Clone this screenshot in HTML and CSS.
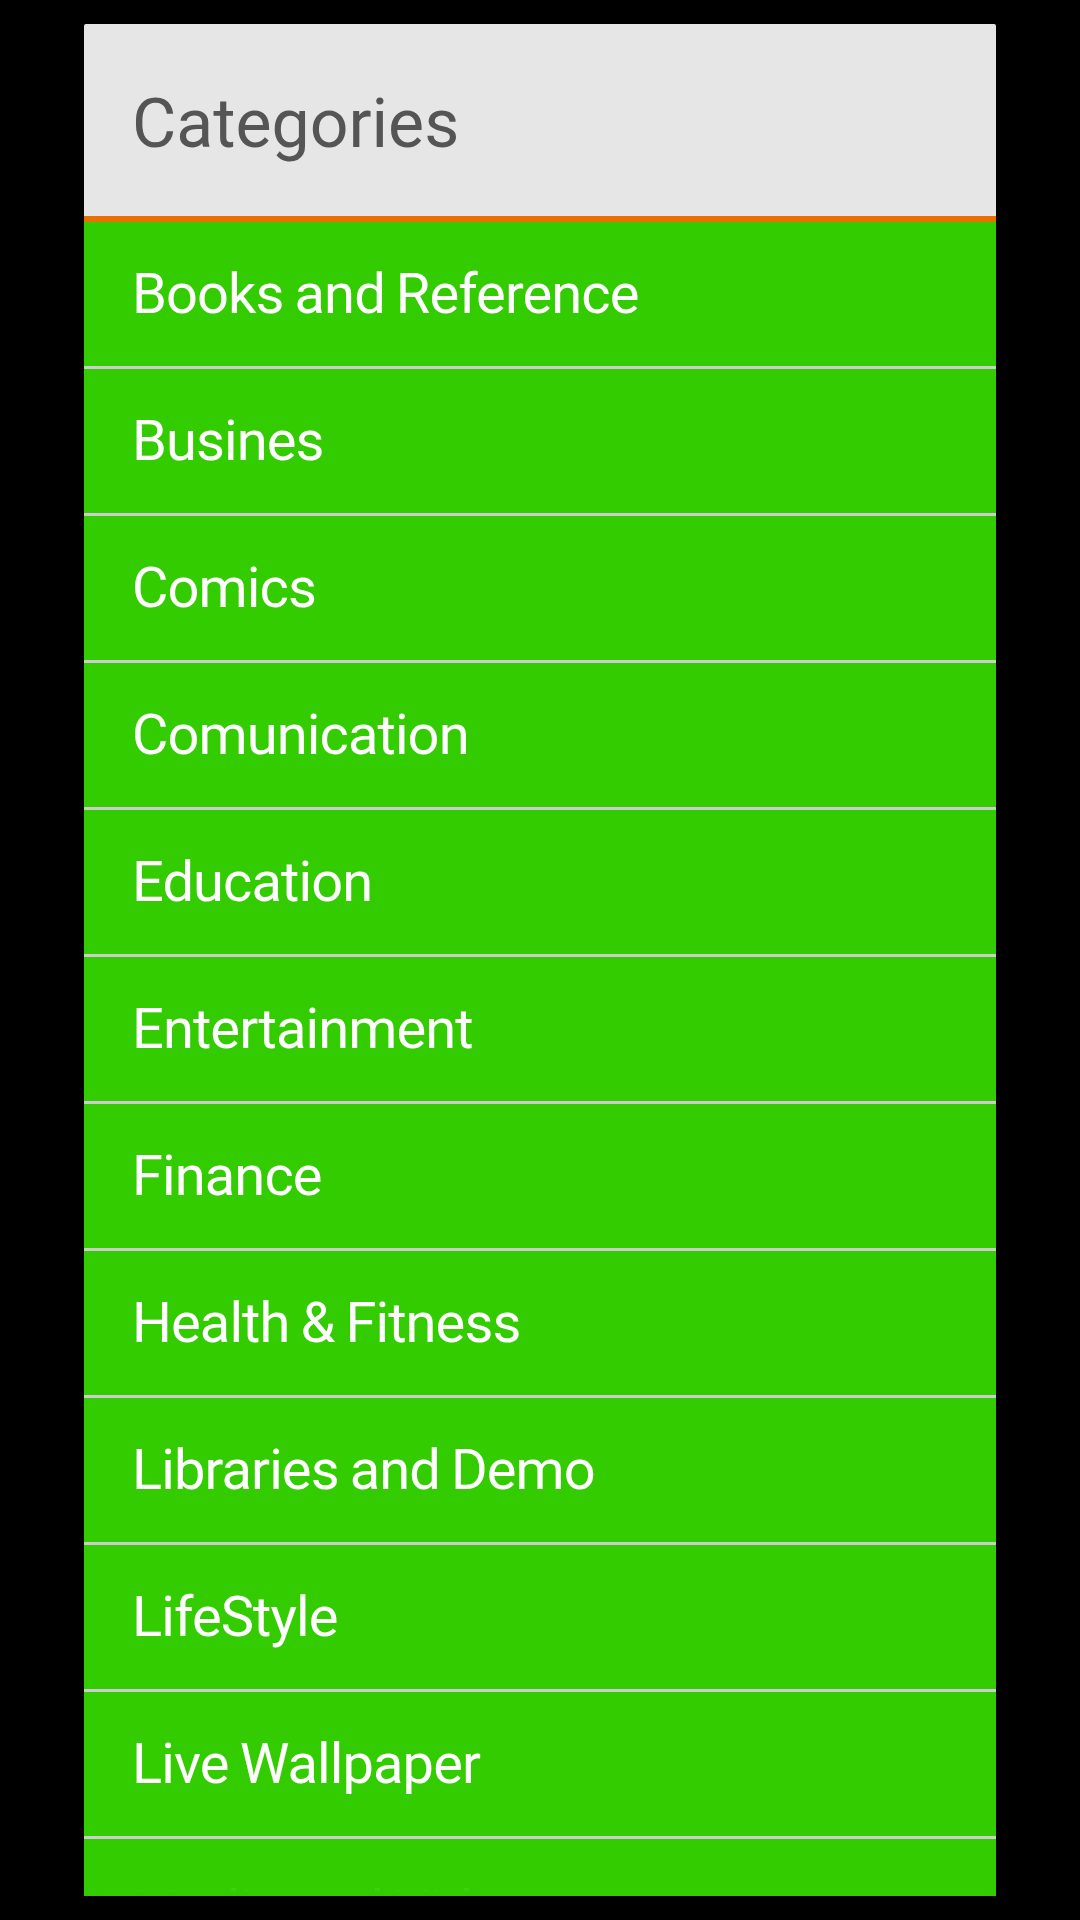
FILE: index.html
```html
<!DOCTYPE html>
<html>
<head>
<meta charset="utf-8">
<link rel="stylesheet" href="styles.css">
</head>
<body>
<div class="dialog">
  <div class="header"><span class="title">Categories</span></div>
  <div class="list">
    <div class="row">Books and Reference</div>
    <div class="row">Busines</div>
    <div class="row">Comics</div>
    <div class="row">Comunication</div>
    <div class="row">Education</div>
    <div class="row">Entertainment</div>
    <div class="row">Finance</div>
    <div class="row">Health &amp; Fitness</div>
    <div class="row">Libraries and Demo</div>
    <div class="row">LifeStyle</div>
    <div class="row">Live Wallpaper</div>
    <div class="row">Media and Video</div>
  </div>
</div>
</body>
</html>
```

FILE: styles.css
```css
html, body {
  margin: 0;
  padding: 0;
  background: #000;
}
body {
  width: 1080px;
  height: 1920px;
  overflow: hidden;
  font-family: Roboto, "Noto Sans", sans-serif;
}
.dialog {
  margin: 24px 0 0 84px;
  width: 912px;
  height: 1872px;
  overflow: hidden;
  display: flex;
  flex-direction: column;
  border-radius: 2px 2px 0 0;
}
.header {
  height: 192px;
  flex: none;
  background: #e6e6e6;
  border-bottom: 6px solid #eb6f00;
  display: flex;
  align-items: center;
  padding-left: 48px;
  box-sizing: content-box;
}
.title {
  font-size: 68px;
  color: #555555;
  line-height: 1;
  position: relative;
  top: 4px;
}
.list {
  flex: 1;
  background: #33cc00;
  position: relative;
  overflow: hidden;
}
.list::after {
  content: "";
  position: absolute;
  left: 0;
  right: 0;
  bottom: 0;
  height: 40px;
  background: linear-gradient(to bottom, rgba(51,204,0,0), #33cc00 90%);
}
.row {
  height: 144px;
  box-sizing: content-box;
  border-bottom: 3px solid #cccccc;
  display: flex;
  align-items: center;
  padding-left: 48px;
  font-size: 56px;
  letter-spacing: -0.9px;
  word-spacing: -2px;
  color: #ffffff;
  line-height: 1;
  flex: none;
}
.row::before {
  content: "";
  display: block;
  height: 4px;
  width: 0;
  align-self: flex-start;
}
```
